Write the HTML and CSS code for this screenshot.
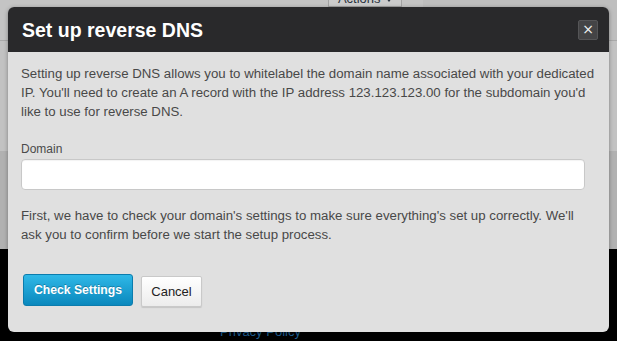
FILE: index.html
```html
<!DOCTYPE html>
<html>
<head>
<meta charset="utf-8">
<link rel="stylesheet" href="styles.css">
</head>
<body>
<div class="page">
  <div class="topbar">
    <button class="actions">Actions <span class="caret"></span></button>
  </div>
  <div class="content"></div>
  <div class="panel"></div>
  <div class="footer">
    <a class="privacy" href="#">Privacy Policy</a>
  </div>
</div>

<div class="modal">
  <div class="modal-header">
    <h3 class="modal-title">Set up reverse DNS</h3>
    <button class="close">&times;</button>
  </div>
  <div class="modal-body">
    <p class="intro">Setting up reverse DNS allows you to whitelabel the domain name associated with your dedicated IP. You'll need to create an A record with the IP address 123.123.123.00 for the subdomain you'd like to use for reverse DNS.</p>
    <label class="field-label">Domain</label>
    <input class="field" type="text">
    <p class="note">First, we have to check your domain's settings to make sure everything's set up correctly. We'll ask you to confirm before we start the setup process.</p>
    <div class="actions-row">
      <button class="btn btn-primary">Check Settings</button>
      <button class="btn btn-default">Cancel</button>
    </div>
  </div>
</div>
</body>
</html>
```

FILE: styles.css
```css
html, body {
  margin: 0;
  padding: 0;
  width: 617px;
  height: 341px;
  overflow: hidden;
  font-family: "Liberation Sans", Arial, Helvetica, sans-serif;
}

body {
  background: #c2c2c2;
  position: relative;
}

.page {
  display: flex;
  flex-direction: column;
  height: 341px;
}

.topbar {
  height: 41px;
  border-bottom: 1px solid #a9a9a9;
  background: #c4c4c4;
  display: flex;
  align-items: flex-start;
  background-image: linear-gradient(to right, transparent 423px, #bebebe 423px);
}

.actions {
  margin: -20px 0 0 328px;
  width: 74px;
  height: 27px;
  padding: 12px 0 0 0;
  border: 1px solid #a3a3a3;
  border-top: 0;
  background: #cbcbcb;
  color: #2a3340;
  font-family: "Liberation Sans", Arial, sans-serif;
  font-size: 13px;
  line-height: 14px;
  text-align: center;
  box-sizing: border-box;
}

.caret {
  display: inline-block;
  width: 0;
  height: 0;
  border-left: 3.5px solid transparent;
  border-right: 3.5px solid transparent;
  border-top: 4px solid #2a3340;
  vertical-align: middle;
  margin-left: 2px;
}

.content {
  height: 113px;
  background: #c2c2c2;
}

.panel {
  height: 100px;
  background: #b1b1b1;
}

.footer {
  flex: 1;
  background: #000;
  padding-top: 73px;
  padding-left: 220px;
}

.privacy {
  color: #1d5f93;
  font-size: 13px;
  line-height: 19px;
  text-decoration: none;
}

.modal {
  position: absolute;
  left: 8px;
  top: 7px;
  width: 601px;
  height: 325px;
  background: #e0e0e0;
  border-radius: 6px;
  overflow: hidden;
  box-shadow: 0 1px 4px rgba(0, 0, 0, 0.35);
}

.modal-header {
  height: 45px;
  background: #29292b;
  display: flex;
  align-items: center;
  justify-content: space-between;
  padding: 0 11px 0 14px;
}

.modal-title {
  margin: 0;
  color: #fff;
  font-size: 19.5px;
  font-weight: bold;
  line-height: 24px;
  padding-top: 1px;
}

.close {
  width: 20px;
  height: 20px;
  padding: 0;
  margin-top: 0;
  background: #444446;
  border: 1px solid #555557;
  border-radius: 2px;
  color: #f2f2f2;
  font-family: "DejaVu Sans", sans-serif;
  font-size: 14px;
  line-height: 17px;
  text-align: center;
  box-sizing: border-box;
}

.modal-body {
  padding: 12px 13px 0 13px;
  color: #484848;
  font-size: 13.25px;
  line-height: 19px;
}

.intro {
  margin: 0 0 19px 0;
}

.field-label {
  display: block;
  font-size: 12px;
  line-height: 19px;
  color: #4a4a4a;
}

.field {
  display: block;
  width: 564px;
  height: 31px;
  box-sizing: border-box;
  margin: 0;
  background: #fff;
  border: 1px solid #c8c8c8;
  border-radius: 4px;
  box-shadow: inset 0 1px 1px rgba(0, 0, 0, 0.05);
}

.note {
  margin: 16px 0 0 0;
  max-width: 560px;
}

.actions-row {
  display: flex;
  align-items: flex-start;
  gap: 8px;
  margin-top: 30px;
  padding-left: 2px;
}

.btn {
  font-family: "Liberation Sans", Arial, sans-serif;
  box-sizing: border-box;
  border-radius: 3px;
  cursor: pointer;
}

.btn-primary {
  width: 110px;
  height: 32px;
  padding: 0;
  font-size: 12.2px;
  font-weight: bold;
  color: #fff;
  background: linear-gradient(to bottom, #2fb8e7, #0a88bd);
  border: 1px solid #0b7cad;
  text-shadow: 0 -1px 0 rgba(0, 0, 0, 0.25);
}

.btn-default {
  width: 61px;
  height: 31px;
  margin-top: 2px;
  padding: 0;
  font-size: 13px;
  color: #222;
  background: linear-gradient(to bottom, #ffffff, #ececec);
  border: 1px solid #c9c9c9;
  border-radius: 2px;
  box-shadow: 0 1px 1px rgba(0, 0, 0, 0.12);
}
```
